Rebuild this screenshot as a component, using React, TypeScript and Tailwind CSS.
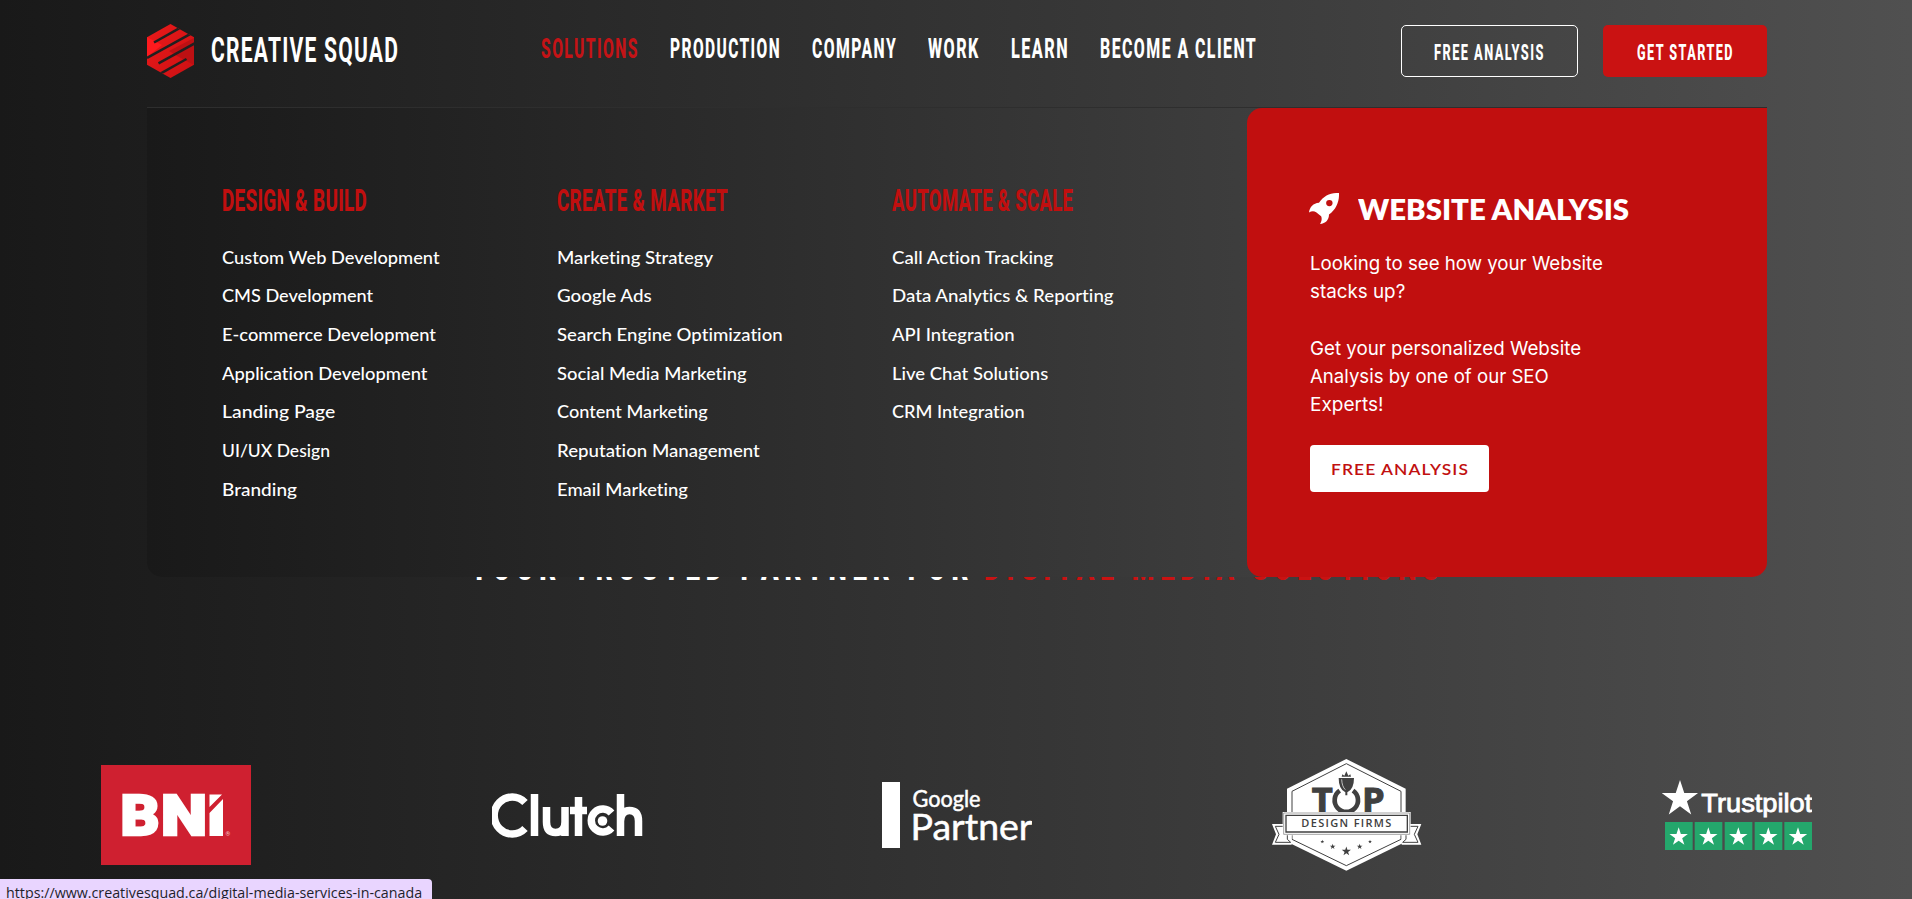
import { useLayoutEffect, useRef, useState, type ReactNode } from "react";

function Fit({ className = "", children }: { className?: string; children: ReactNode }) {
  const outer = useRef<HTMLSpanElement>(null);
  const inner = useRef<HTMLSpanElement>(null);
  const [scale, setScale] = useState(1);
  useLayoutEffect(() => {
    if (outer.current && inner.current) {
      setScale(outer.current.offsetWidth / inner.current.offsetWidth);
    }
  }, []);
  return (
    <span ref={outer} className={`block text-left whitespace-nowrap ${className}`}>
      <span ref={inner} className="inline-block origin-left" style={{ transform: `scaleX(${scale})` }}>
        {children}
      </span>
    </span>
  );
}

const nav = [
  { label: "SOLUTIONS", cls: "w-[98px] text-[#c51316]" },
  { label: "PRODUCTION", cls: "w-[111px]" },
  { label: "COMPANY", cls: "w-[85px]" },
  { label: "WORK", cls: "w-[52px]" },
  { label: "LEARN", cls: "w-[58px]" },
  { label: "BECOME A CLIENT", cls: "w-[157px]" },
];

const columns = [
  {
    title: "DESIGN & BUILD",
    cls: "w-[145px]",
    items: [
      ["Custom Web Development", "w-[218px]"],
      ["CMS Development", "w-[151px]"],
      ["E-commerce Development", "w-[214px]"],
      ["Application Development", "w-[205px]"],
      ["Landing Page", "w-[113px]"],
      ["UI/UX Design", "w-[108px]"],
      ["Branding", "w-[75px]"],
    ],
  },
  {
    title: "CREATE & MARKET",
    cls: "w-[171px]",
    items: [
      ["Marketing Strategy", "w-[156px]"],
      ["Google Ads", "w-[95px]"],
      ["Search Engine Optimization", "w-[226px]"],
      ["Social Media Marketing", "w-[190px]"],
      ["Content Marketing", "w-[151px]"],
      ["Reputation Management", "w-[203px]"],
      ["Email Marketing", "w-[131px]"],
    ],
  },
  {
    title: "AUTOMATE & SCALE",
    cls: "w-[181px]",
    items: [
      ["Call Action Tracking", "w-[161px]"],
      ["Data Analytics & Reporting", "w-[222px]"],
      ["API Integration", "w-[123px]"],
      ["Live Chat Solutions", "w-[156px]"],
      ["CRM Integration", "w-[133px]"],
    ],
  },
];

const analysisLines = [
  ["Looking to see how your Website", "w-[293px]"],
  ["stacks up?", "w-[95px]"],
  ["", "w-[10px]"],
  ["Get your personalized Website", "w-[271px]"],
  ["Analysis by one of our SEO", "w-[239px]"],
  ["Experts!", "w-[73px]"],
];

const STAR = "M0-10 2.25-3.1 9.5-3.1 3.65 1.2 5.9 8.1 0 3.8-5.9 8.1-3.65 1.2-9.5-3.1-2.25-3.1Z";

function BrandMark() {
  return (
    <svg width="47" height="54" viewBox="0 0 47 54" className="shrink-0">
      <defs>
        <linearGradient id="mark" x1="0" y1="0" x2="1" y2="1">
          <stop offset="0" stopColor="#ea1a1a" />
          <stop offset="1" stopColor="#cb1013" />
        </linearGradient>
        <clipPath id="hex">
          <path d="M23.5 0 47 13.3V40.7L23.5 54 0 40.7V13.3Z" />
        </clipPath>
      </defs>
      <g clipPath="url(#hex)">
        <path d="M0 0H47V54H0Z" fill="url(#mark)" />
        <path d="M0 13 15 21 0 33Z" fill="#ff1a1e" />
        <path d="M47 41 32 33 22 27 47 14Z" fill="#bd1013" />
        <g stroke="#202020" strokeWidth="2.5">
          <path d="M33 3.8 7 18.5" />
          <path d="M44 9.6 0 34" />
          <path d="M48 19.2 11.500 39.3" />
          <path d="M39.500 35 13 49.800" />
        </g>
      </g>
    </svg>
  );
}

function Bni() {
  return (
    <svg width="150" height="100" viewBox="0 0 150 100">
      <path d="M0 0H150V100H0Z" fill="#cf2030" />
      <g fill="#fff" stroke="#fff" strokeWidth="2.500" fontFamily="Roboto, sans-serif" fontWeight="900" fontSize="56">
        <text x="19.500" y="69.500" textLength="39" lengthAdjust="spacingAndGlyphs">B</text>
        <text x="60" y="69.500" textLength="46" lengthAdjust="spacingAndGlyphs">N</text>
      </g>
      <path d="M108.500 29.500H121L108.500 42ZM108.500 48 122 34V71H108.500Z" fill="#fff" />
      <text x="124.500" y="71" fill="#f3c3c7" fontFamily="Roboto, sans-serif" fontSize="6">®</text>
    </svg>
  );
}

function Clutch() {
  return (
    <svg width="152" height="46" viewBox="0 0 152 46">
      <g fill="none" stroke="#fff" strokeWidth="7.5">
        <path d="M33 10.500A18 18.500 0 1 0 33 36.500" />
        <path d="M42.500 2V44" />
        <path d="M54.500 15V30Q54.500 40.500 63.500 40.500 73 40.500 73 30V15M73 29V44" />
        <path d="M86.500 5V44M78 18.500H95" />
        <path d="M119.500 21A11.500 11.500 0 1 0 119.500 36" />
        <path d="M128.500 2V44M128.500 29Q129 18.500 137.500 18.500 146.500 18.500 146.500 29V44" />
      </g>
      <circle cx="110.500" cy="29" r="4.800" fill="#fff" />
    </svg>
  );
}

function GooglePartner() {
  return (
    <svg width="150" height="66" viewBox="0 0 150 66">
      <path d="M0 0H18V66H0Z" fill="#fff" />
      <g fill="#fff" stroke="#fff" strokeWidth=".5" fontFamily="Lato, sans-serif">
        <text x="30.500" y="24.500" fontSize="22.500" textLength="68" lengthAdjust="spacingAndGlyphs">Google</text>
        <text x="28.500" y="57.500" fontSize="36" textLength="122" lengthAdjust="spacingAndGlyphs">Partner</text>
      </g>
    </svg>
  );
}

function TopDesign() {
  return (
    <svg width="150" height="112" viewBox="36 27 450 336">
      <path d="M259 27 437 116V275L259 362 81 275V116Z" fill="#fff" />
      <path d="M259 41 423 124V268L259 347 96 268V124Z" fill="none" stroke="#404040" strokeWidth="3" />
      <g fill="#fff">
        <path d="M36 222H80V254H95V284H36L48 253Z" />
        <path d="M484 222H440V254H425V284H484L472 253Z" />
      </g>
      <g fill="none" stroke="#404040" strokeWidth="3">
        <path d="M72 229H46L57 253 46 277H92L82 268V254" />
        <path d="M448 229H474L463 253 474 277H428L438 268V254" />
      </g>
      <g fill="#404040">
        <g stroke="#404040" strokeWidth="3" fontFamily="Open Sans, sans-serif" fontWeight="700" fontSize="102">
          <text x="155" y="187" textLength="63" lengthAdjust="spacingAndGlyphs">T</text>
          <text x="306" y="187" textLength="68" lengthAdjust="spacingAndGlyphs">P</text>
        </g>
        <path d="M236 84H282Q282 118 262 127V136H256V127Q236 118 236 84ZM245 80 247 73 253 77 259 64 265 77 271 73 273 80Z" />
      </g>
      <path d="M245 88Q246 110 256 119" fill="none" stroke="#fff" strokeWidth="2" />
      <path d="M239 122A35 35 0 1 0 279 122" fill="none" stroke="#404040" strokeWidth="14" />
      <path d="M68 186H452V256H68Z" fill="#fff" />
      <path d="M71 189H449V253H71Z" fill="none" stroke="#777" strokeWidth="2" />
      <path d="M78 196H442V246H78Z" fill="none" stroke="#404040" strokeWidth="4" />
      <text x="124" y="232" fill="#404040" fontFamily="Open Sans, sans-serif" fontWeight="600" fontSize="33" letterSpacing="4" textLength="274" lengthAdjust="spacingAndGlyphs">
        DESIGN FIRMS
      </text>
      <g fill="#404040">
        <path d={STAR} transform="translate(187 275) scale(.6)" />
        <path d={STAR} transform="translate(218 290) scale(.9)" />
        <path d={STAR} transform="translate(259 304) scale(1.450)" />
        <path d={STAR} transform="translate(299 290) scale(.9)" />
        <path d={STAR} transform="translate(330 275) scale(.6)" />
      </g>
    </svg>
  );
}

function Trustpilot() {
  return (
    <svg width="150" height="70" viewBox="66 60 450 210">
      <path d={STAR} fill="#fff" transform="translate(120 117) scale(5.7)" />
      <text x="184" y="156" fill="#fff" stroke="#fff" strokeWidth="2.5" fontFamily="Liberation Sans, sans-serif" fontSize="79" textLength="333" lengthAdjust="spacingAndGlyphs">
        Trustpilot
      </text>
      {[75, 164, 254, 344, 433].map((x) => (
        <g key={x}>
          <path d="M0 0H83V84H0Z" fill="#24a76c" transform={`translate(${x} 186)`} />
          <path d={STAR} fill="#fff" transform={`translate(${x + 41} 231) scale(2.9)`} />
        </g>
      ))}
    </svg>
  );
}

export default function App() {
  return (
    <div className="relative flex h-[899px] w-[1912px] flex-col overflow-hidden bg-linear-to-r from-[#191919] to-[#505050] font-['Roboto',sans-serif] text-white [font-variant-ligatures:none]">
      <header className="relative z-20 ml-[147px] flex h-[108px] w-[1620px] items-start border-b border-[#2e2e2e]">
        <div className="flex items-center gap-[17px] pt-6">
          <BrandMark />
          <Fit className="w-[188px] text-[35px] leading-[52px] font-bold tracking-[2px]">CREATIVE SQUAD</Fit>
        </div>
        <nav className="ml-[142px] flex gap-[31px] pt-[29px] text-[28px] leading-10 font-extrabold tracking-[2.5px]">
          {nav.map((n) => (
            <a key={n.label}>
              <Fit className={n.cls}>{n.label}</Fit>
            </a>
          ))}
        </nav>
        <div className="ml-auto flex gap-[25px] pt-[25px] text-[22px] leading-[50px] font-extrabold tracking-[2.5px]">
          <button className="flex h-[52px] w-[177px] items-center justify-center rounded-[5px] border border-white pt-[3px]">
            <Fit className="w-[111px]">FREE ANALYSIS</Fit>
          </button>
          <button className="flex h-[52px] w-[164px] items-center justify-center rounded-[5px] bg-[#ca1212] pt-[3px]">
            <Fit className="w-[97px]">GET STARTED</Fit>
          </button>
        </div>
      </header>

      <div className="absolute top-[108px] left-[147px] z-10 flex h-[469px] w-[1620px] rounded-b-[15px] bg-linear-to-r from-[#191919] to-[#505050]">
        <div className="flex flex-1 pt-[73px] pl-[75px]">
          {columns.map((c) => (
            <section key={c.title} className="w-[335px]">
              <h3 className="text-[31.5px] leading-10 font-extrabold tracking-[0.5px] text-[#c10f0f]">
                <Fit className={c.cls}>{c.title}</Fit>
              </h3>
              <ul className="mt-[16.5px] font-['Lato',sans-serif] text-[18px] leading-[38.7px] font-medium">
                {c.items.map(([label, w]) => (
                  <li key={label}>
                    <Fit className={w}>{label}</Fit>
                  </li>
                ))}
              </ul>
            </section>
          ))}
        </div>
        <aside className="flex w-[520px] flex-col rounded-l-[15px] rounded-br-[15px] bg-[#c10f0f] pt-[82px] pl-[63px]">
          <div className="flex items-start">
            <svg width="30" height="31" viewBox="0 0 84 89" preserveAspectRatio="none" className="mt-[3px] -ml-px" fill="#fff">
              <path fillRule="evenodd" d="M84 0C60-1 42 7 28 28 12 29 2 40 0 56 7 51 14 51 20 55L34 67C37 75 35 82 31 89 46 88 56 78 56 62 77 46 85 24 84 0ZM57 20a9 9 0 1 0 0 18 9 9 0 0 0 0-18Z" />
            </svg>
            <Fit className="mt-px ml-[19px] w-[271px] font-['Lato',sans-serif] text-[27.5px] leading-[38px] font-extrabold">WEBSITE ANALYSIS</Fit>
          </div>
          <div className="mt-[21px] font-['Inter',sans-serif] text-[19px] leading-[28.2px]">
            {analysisLines.map(([t, w], i) => (
              <p key={i} className="h-[28.2px]">
                {t && <Fit className={w}>{t}</Fit>}
              </p>
            ))}
          </div>
          <button className="mt-[26px] flex h-[47px] w-[179px] items-center justify-center rounded-[4px] bg-white font-['Lato',sans-serif] text-[16px] font-semibold tracking-[1px] text-[#c10f0f]">
            <Fit className="w-[138px]">FREE ANALYSIS</Fit>
          </button>
        </aside>
      </div>

      <main className="flex flex-col">
        <h1 className="mt-[437px] flex gap-2.5 pl-[471px] text-[36px] leading-[46px] font-black tracking-[8px]">
          <Fit className="w-[503px]">YOUR TRUSTED PARTNER FOR</Fit>
          <Fit className="w-[460px] text-[#ca1212]">DIGITAL MEDIA SOLUTIONS</Fit>
        </h1>
        <div className="mt-[168px] ml-[101px] flex h-28 items-center">
          <div className="w-[391px]"><Bni /></div>
          <div className="w-[390px]"><Clutch /></div>
          <div className="w-[390px]"><GooglePartner /></div>
          <div className="w-[390px]"><TopDesign /></div>
          <Trustpilot />
        </div>
      </main>

      <div className="absolute bottom-0 left-0 z-30 h-5 w-[432px] overflow-hidden rounded-tr-[4px] bg-[#e9d5ff] pl-1.5 font-['Open_Sans',sans-serif] text-[14.5px] leading-[27px] text-[#1f1f2b]">
        <Fit className="w-[416px]">https://www.creativesquad.ca/digital-media-services-in-canada</Fit>
      </div>
    </div>
  );
}
